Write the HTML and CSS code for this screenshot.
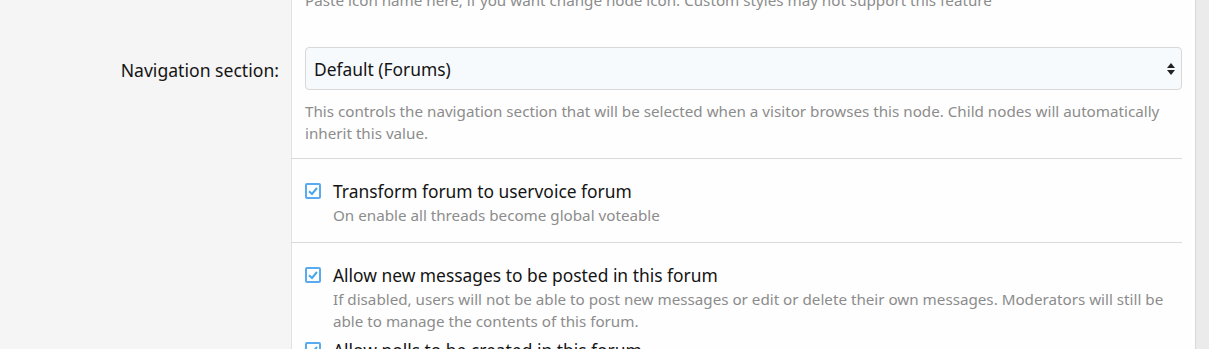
FILE: index.html
```
<!DOCTYPE html>
<html lang="en">
<head>
    <meta charset="UTF-8">
    <title>Node options</title>
    <link rel="stylesheet" href="styles.css">
</head>
<body>

    <div class="page">
        <div class="form-block">

            <!-- Fila anterior (solo se ve la ayuda) -->
            <div class="form-row row-icon">
                <div class="row-label"></div>
                <div class="row-input">
                    <div class="hint">Paste icon name here, if you want change node icon. Custom styles may not support this feature</div>
                </div>
            </div>

            <div class="form-row">
                <div class="row-label"><label>Navigation section:</label></div>
                <div class="row-input">
                    <div class="select">
                        <span>Default (Forums)</span>
                        <span class="arrows">
                            <svg width="8" height="14" viewBox="0 0 8 14"><path d="M4 1 L8 6 L0 6 Z M4 13 L0 8 L8 8 Z" fill="#222"/></svg>
                        </span>
                    </div>
                    <div class="explain">This controls the navigation section that will be selected when a visitor browses this node. Child nodes will automatically inherit this value.</div>
                </div>
            </div>

            <div class="form-row">
                <div class="row-label"></div>
                <div class="row-input sep">
                    <label class="check">
                        <span class="box"><svg width="12" height="12" viewBox="0 0 12 12"><path d="M2 6.2 L5 9 L10 3" fill="none" stroke="#47a7eb" stroke-width="2"/></svg></span>
                        <span class="check-text">
                            <span class="check-label">Transform forum to uservoice forum</span>
                            <span class="hint">On enable all threads become global voteable</span>
                        </span>
                    </label>
                </div>
            </div>

            <div class="form-row">
                <div class="row-label"></div>
                <div class="row-input sep">
                    <label class="check">
                        <span class="box"><svg width="12" height="12" viewBox="0 0 12 12"><path d="M2 6.2 L5 9 L10 3" fill="none" stroke="#47a7eb" stroke-width="2"/></svg></span>
                        <span class="check-text">
                            <span class="check-label">Allow new messages to be posted in this forum</span>
                            <span class="hint">If disabled, users will not be able to post new messages or edit or delete their own messages. Moderators will still be able to manage the contents of this forum.</span>
                        </span>
                    </label>
                    <label class="check">
                        <span class="box"><svg width="12" height="12" viewBox="0 0 12 12"><path d="M2 6.2 L5 9 L10 3" fill="none" stroke="#47a7eb" stroke-width="2"/></svg></span>
                        <span class="check-text">
                            <span class="check-label">Allow polls to be created in this forum</span>
                        </span>
                    </label>
                </div>
            </div>

        </div>
    </div>

</body>
</html>
```
FILE: styles.css
```
* {
    margin: 0;
    padding: 0;
    box-sizing: border-box;
}

body {
    background-color: #ebebeb;
    font-family: "Noto Sans", "Open Sans", sans-serif;
    color: #141414;
    overflow: hidden;
}

.page {
    width: 1196px;
    height: 349px;
    overflow: hidden;
}

.form-block {
    background-color: #fefefe;
    border-right: 1px solid #d8d8d8;
    margin-top: -11px;
}

.form-row {
    display: flex;
}

.row-label {
    width: 292px;
    flex-shrink: 0;
    background-color: #f5f5f5;
    border-right: 1px solid #e2e2e2;
    text-align: right;
    padding-right: 12px;
    font-size: 17.6px;
}

.row-label label {
    display: block;
    padding-top: 10px;
    line-height: 26px;
}

.row-input {
    flex: 1;
    padding-left: 13px;
    margin-right: 13px;
}

.row-icon .row-input {
    padding-bottom: 36px;
}

.explain {
    font-size: 15.2px;
    line-height: 22px;
    color: #8c8c8c;
}

/* Select */
.select {
    height: 43px;
    border: 1px solid #d8d8d8;
    border-radius: 4px;
    background-color: #f7fafd;
    display: flex;
    align-items: center;
    justify-content: space-between;
    padding: 0 6px 0 8px;
    font-size: 17.4px;
}

.arrows {
    display: flex;
}

.select + .explain {
    margin-top: 10px;
    padding-bottom: 14px;
}

/* Casillas */
.sep {
    border-top: 1px solid #dadada;
    margin-left: -1px;
    padding-left: 14px;
    padding-top: 19px;
    padding-bottom: 16px;
}

.check {
    display: flex;
    align-items: flex-start;
}

.check + .check {
    margin-top: 5px;
}

.box {
    width: 16px;
    height: 16px;
    flex-shrink: 0;
    border: 2px solid #5aaaf0;
    border-radius: 2px;
    margin-top: 5px;
    margin-right: 12px;
    display: flex;
    align-items: center;
    justify-content: center;
    background-color: #fff;
}

.check-text {
    display: flex;
    flex-direction: column;
}

.check-label {
    font-size: 17.4px;
    line-height: 26px;
}

.hint {
    font-size: 15.2px;
    line-height: 22px;
    color: #8c8c8c;
}
```
